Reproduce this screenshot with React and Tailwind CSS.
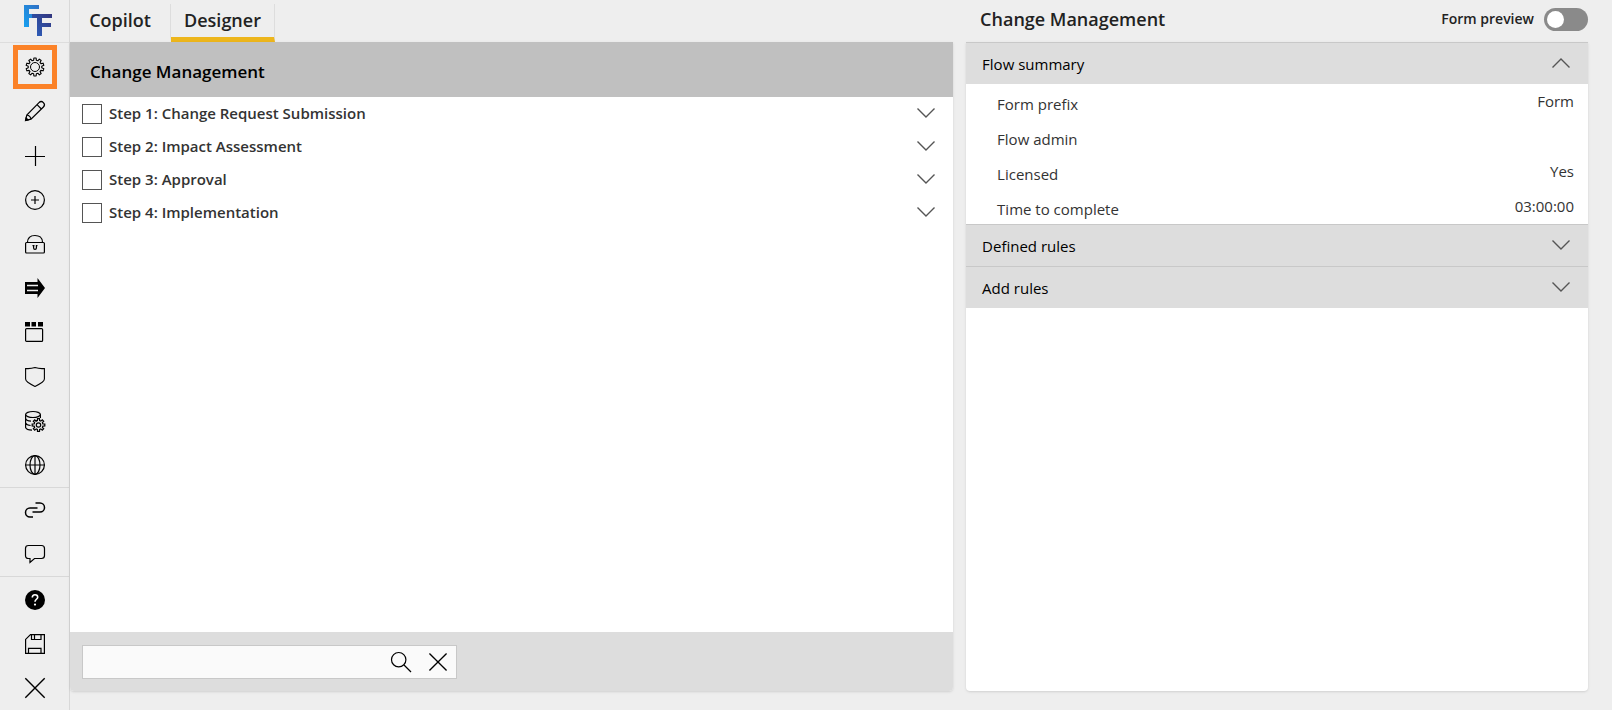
import React, { useState } from 'react';

// ─────────────────────────────────────────────
//  Icons (20x20, drawn with the current colour)
// ─────────────────────────────────────────────
const Icon = ({ children, className = 'w-5 h-5' }) => (
  <svg
    viewBox="0 0 20 20"
    className={`${className} shrink-0 overflow-visible`}
    fill="none"
    stroke="currentColor"
    strokeWidth="1.2"
    aria-hidden="true"
  >
    {children}
  </svg>
);

// Outline of a toothed wheel around cx, cy
const gearPath = (cx, cy, inner, outer, teeth) => {
  const points = [];
  const step = (Math.PI * 2) / teeth;
  for (let i = 0; i < teeth; i++) {
    const a = i * step - Math.PI / 2;
    [[-0.32, inner], [-0.2, outer], [0.2, outer], [0.32, inner]].forEach(([k, r]) => {
      points.push(`${(cx + Math.cos(a + k * step) * r).toFixed(2)} ${(cy + Math.sin(a + k * step) * r).toFixed(2)}`);
    });
  }
  return `M${points.join('L')}Z`;
};

const Chevron = ({ up = false }) => (
  <svg viewBox="0 0 18 10" className="w-[18px] h-[10px] shrink-0" fill="none" stroke="#555" strokeWidth="1.4" aria-hidden="true">
    <path d={up ? 'M.5 9.5 9 1l8.5 8.5' : 'M.5.5 9 9 17.5.5'} />
  </svg>
);

const Logo = () => (
  <svg viewBox="0 0 28 31" className="w-7 h-[31px]" aria-label="FlowForma">
    <defs>
      <linearGradient id="back" x1="0" y1="1" x2="1" y2="0">
        <stop offset="0" stopColor="#17a0f0" />
        <stop offset="1" stopColor="#2f6fc4" />
      </linearGradient>
      <linearGradient id="front" x1="0" y1="1" x2="1" y2="0">
        <stop offset="0" stopColor="#2d62c0" />
        <stop offset="1" stopColor="#32347c" />
      </linearGradient>
    </defs>
    <path d="M0 0h15v4H5v5h7v4H5v9H0z" fill="url(#back)" />
    <path d="M8 9h20v4H18v5h9v4h-9v9h-5V13H8z" fill="url(#front)" />
  </svg>
);

const designTools = [
  { label: 'Settings', active: true, icon: <Icon><path d={gearPath(10, 10, 6.8, 9, 10)} strokeWidth="1.1" strokeLinejoin="round" /><circle cx="10" cy="10" r="4.5" strokeWidth="1" /></Icon> },
  { label: 'Edit', icon: <Icon><path d="M.6 19.4 1.8 14 14 1.6a3 3 0 0 1 4.4 4.4L6 18.2zM1.8 14q3.6.6 4.2 4.2M12 3.6l4.4 4.4" /><path d="m.6 19.4.5-2.4 1.9 1.9z" fill="currentColor" /></Icon> },
  { label: 'Add', icon: <Icon><path d="M10.5 0v20M0 10.5h20" /></Icon> },
  { label: 'Add step', icon: <Icon><circle cx="10" cy="10" r="9.4" /><path d="M10 6v8M6 10h8" /></Icon> },
  { label: 'Lock', icon: <Icon><rect x=".6" y="8.5" width="18.8" height="10.5" rx="1" /><path d="M2.5 8.5C2.5 3 6 1.5 10 1.5s7.5 1.5 7.5 7" /><path d="M7.5 11.6h2M10.8 11.6h1.7M8.6 12v2a1.4 1.4 0 0 0 2.8 0v-2" /></Icon> },
  { label: 'Flow', icon: <Icon><path d="M0 4h12.5V0L20 10l-7.5 10v-4H0z" fill="currentColor" stroke="none" /><path d="M2 7.5h11M2 12.5h11" stroke="#eee" strokeWidth="1.5" /></Icon> },
  { label: 'Form layout', icon: <Icon><path d="M0 0h5v4.5H0zM6.5 0h4.5v4.5H6.5zM13 0h5v4.5h-5z" fill="currentColor" stroke="none" /><rect x=".6" y="6.6" width="17" height="12.8" rx="1" /></Icon> },
  { label: 'Security', icon: <Icon><path d="M.6 1.5q5 .5 9.4-1 4.4 1.5 9.4 1V12q0 3-9.4 7.4Q.6 15 .6 12z" strokeWidth="1.1" /></Icon> },
  {
    label: 'Data sources',
    icon: (
      <Icon>
        <ellipse cx="8" cy="3.5" rx="7.4" ry="3" />
        <path d="M.6 3.5v13q1 2.5 6.4 2.7M15.4 3.5V7M.6 7.5q1 2.5 5.4 2.7M.6 12q1 2.3 5 2.5M10 10l2-.4" />
        <path d={gearPath(13.5, 14, 4.5, 6.4, 8)} />
        <circle cx="13.5" cy="14" r="2.2" />
      </Icon>
    ),
  },
  { label: 'Language', icon: <Icon><circle cx="10" cy="10" r="9.4" /><ellipse cx="10" cy="10" rx="5" ry="9.4" /><path d="M10 .6v18.8M.6 10h18.8" /></Icon> },
];

const shareTools = [
  { label: 'Link', icon: <Icon><path d="M10.5 3H15a4.4 4.4 0 0 1 0 9H7.5M12.5 8H5a4.4 4.4 0 0 0 0 9h3" strokeWidth="1.5" /></Icon> },
  { label: 'Comments', icon: <Icon><path d="M3.5 1.5h13q3 0 3 3v7q0 3-3 3H9.5L5 18.5v-4H3.5q-3 0-3-3v-7q0-3 3-3z" /></Icon> },
];

const fileTools = [
  { label: 'Help', icon: <Icon><circle cx="10" cy="10" r="10" fill="currentColor" stroke="none" /><path d="M7.3 7.5C7.3 5.5 8.5 4.7 10 4.7s2.7 1 2.7 2.5c0 2-2.7 2.2-2.7 4.6" stroke="#fff" strokeWidth="1.6" /><circle cx="10" cy="14.6" r="1.1" fill="#fff" stroke="none" /></Icon> },
  { label: 'Save', icon: <Icon><path d="M5.5.6h13.9v18.8H.6v-14zM6.5.6v4.9h9.5V.6M9.5.6v4.9M3.5 19.4v-5h12.5v5" /></Icon> },
  { label: 'Close', icon: <Icon><path d="m.3.3 19.4 19.4M19.7.3.3 19.7" strokeWidth="1.4" /></Icon> },
];

const steps = [
  'Step 1: Change Request Submission',
  'Step 2: Impact Assessment',
  'Step 3: Approval',
  'Step 4: Implementation',
];

const summary = [
  { label: 'Form prefix', value: 'Form' },
  { label: 'Flow admin', value: '' },
  { label: 'Licensed', value: 'Yes' },
  { label: 'Time to complete', value: '03:00:00' },
];

const ToolGroup = ({ tools, className }) => (
  <div className={`flex flex-col ${className}`}>
    {tools.map((tool) => (
      <div key={tool.label} className="flex-1 min-h-11 flex items-center justify-center">
        <button
          aria-label={tool.label}
          className={`w-11 h-11 flex items-center justify-center ${tool.active ? 'border-5 border-[#fb8228]' : ''}`}
        >
          {tool.icon}
        </button>
      </div>
    ))}
  </div>
);

const SectionHeader = ({ title, open, onClick }) => (
  <button
    onClick={onClick}
    aria-expanded={open}
    className="w-full h-[42px] pt-0.5 pl-4 pr-[18px] flex items-center justify-between bg-[#ddd] border-t border-[#c8c8c8] text-black"
  >
    <span>{title}</span>
    <span className="pb-1">
      <Chevron up={open} />
    </span>
  </button>
);

const App = () => {
  const [tab, setTab] = useState('Designer');
  const [openSection, setOpenSection] = useState('Flow summary');
  const [query, setQuery] = useState('');

  const toggle = (name) => setOpenSection(openSection === name ? '' : name);

  return (
    <div className="min-h-screen flex bg-[#eee] text-[#333] text-[15px] font-['Open_Sans','Noto_Sans',sans-serif]">
      {/* Tool rail */}
      <nav className="w-[70px] shrink-0 flex flex-col border-r border-[#d8d8d8] text-black">
        <div className="h-[43px] shrink-0 pl-1.5 pb-0.5 flex items-center justify-center border-b border-[#ddd]">
          <Logo />
        </div>
        <ToolGroup tools={designTools} className="grow-10 pt-0.5" />
        <ToolGroup tools={shareTools} className="grow-2 border-y border-[#d8d8d8]" />
        <ToolGroup tools={fileTools} className="grow-3" />
      </nav>

      <main className="flex-1 grid grid-cols-[71fr_50fr] gap-[13px] pr-6 pb-[19px]">
        {/* Designer */}
        <section className="min-w-0 flex flex-col">
          <div role="tablist" className="h-[42px] pt-1 flex items-stretch">
            {['Copilot', 'Designer'].map((name) => (
              <button
                key={name}
                role="tab"
                aria-selected={tab === name}
                onClick={() => setTab(name)}
                className={`pb-0.5 border-r border-[#ddd] border-b-5 text-lg font-semibold text-[#222] ${name === 'Copilot' ? 'w-[101px]' : 'w-[104px]'} ${tab === name ? 'border-b-[#edb61c]' : 'border-b-transparent'}`}
              >
                {name}
              </button>
            ))}
          </div>
          <div className="flex-1 flex flex-col bg-white rounded-b shadow-sm">
            <h2 className="h-[55px] px-5 pt-1 flex items-center bg-[#c0c0c0] text-[17px] font-semibold text-black">
              Change Management
            </h2>
            <ul className="flex-1">
              {steps.map((step) => (
                <li key={step} className="h-[33px] pl-3 pr-[18px] flex items-center justify-between">
                  <label className="flex items-center gap-[7px] font-semibold">
                    <input type="checkbox" className="appearance-none w-5 h-5 bg-white border border-[#555] checked:bg-[#555]" />
                    {step}
                  </label>
                  <button aria-label={`Expand ${step}`} className="pb-0.5">
                    <Chevron />
                  </button>
                </li>
              ))}
            </ul>
            <div className="h-[59px] px-3 flex items-center bg-[#ddd] rounded-b">
              <div className="w-[375px] h-[34px] pr-[9px] flex items-center gap-[18px] bg-[#fafafa] border border-[#c8c8c8] text-black">
                <input
                  type="text"
                  aria-label="Search steps"
                  value={query}
                  onChange={(e) => setQuery(e.target.value)}
                  className="flex-1 min-w-0 h-full px-2 bg-transparent outline-none"
                />
                <button aria-label="Search">
                  <Icon><circle cx="7.7" cy="7.7" r="7.2" /><path d="m13 13 7 7" /></Icon>
                </button>
                <button aria-label="Clear search" onClick={() => setQuery('')}>
                  <Icon className="w-[18px] h-[18px]"><path d="m.5.5 19 19M19.5.5l-19 19" strokeWidth="1.5" /></Icon>
                </button>
              </div>
            </div>
          </div>
        </section>

        {/* Flow properties */}
        <section className="min-w-0 flex flex-col">
          <div className="h-[42px] pl-3.5 pb-1 flex items-center justify-between">
            <h2 className="text-lg font-semibold text-[#222]">Change Management</h2>
            <label className="flex items-center gap-2.5 text-sm font-semibold text-[#222]">
              Form preview
              <input
                type="checkbox"
                role="switch"
                className="appearance-none w-11 h-[23px] rounded-full bg-[#8a8a8a] before:block before:w-[17px] before:h-[17px] before:m-[3px] before:rounded-full before:bg-white checked:before:ml-6"
              />
            </label>
          </div>
          <div className="flex-1 bg-white rounded-b shadow-sm">
            <SectionHeader title="Flow summary" open={openSection === 'Flow summary'} onClick={() => toggle('Flow summary')} />
            {openSection === 'Flow summary' && (
              <dl>
                {summary.map((row) => (
                  <div key={row.label} className="h-[35px] pl-[31px] pr-3.5 flex justify-between leading-6">
                    <dt className="pt-2">{row.label}</dt>
                    <dd className="pt-[5px]">{row.value}</dd>
                  </div>
                ))}
              </dl>
            )}
            <SectionHeader title="Defined rules" open={openSection === 'Defined rules'} onClick={() => toggle('Defined rules')} />
            <SectionHeader title="Add rules" open={openSection === 'Add rules'} onClick={() => toggle('Add rules')} />
          </div>
        </section>
      </main>
    </div>
  );
};

export default App;
